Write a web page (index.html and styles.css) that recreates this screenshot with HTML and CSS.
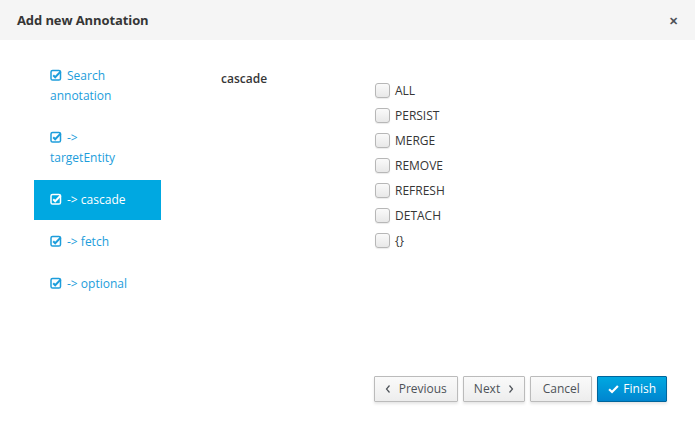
FILE: index.html
```html
<!DOCTYPE html>
<html>
<head>
<meta charset="utf-8">
<link rel="stylesheet" href="styles.css">
</head>
<body>
<div class="modal">
  <div class="modal-header">
    <span class="title">Add new Annotation</span>
    <span class="close">&#x2715;</span>
  </div>
  <div class="modal-body">
    <ul class="steps">
      <li class="step"><svg class="chk" viewBox="0 0 12 12"><rect x="1" y="1.5" width="9.5" height="9.5" rx="1.6" fill="none" stroke="currentColor" stroke-width="1.5"/><path d="M3.2 6.2 L5.2 8.2 L10.8 2.4" fill="none" stroke="currentColor" stroke-width="2"/></svg>Search annotation</li>
      <li class="step"><svg class="chk" viewBox="0 0 12 12"><rect x="1" y="1.5" width="9.5" height="9.5" rx="1.6" fill="none" stroke="currentColor" stroke-width="1.5"/><path d="M3.2 6.2 L5.2 8.2 L10.8 2.4" fill="none" stroke="currentColor" stroke-width="2"/></svg>-&gt; targetEntity</li>
      <li class="step active"><svg class="chk" viewBox="0 0 12 12"><rect x="1" y="1.5" width="9.5" height="9.5" rx="1.6" fill="none" stroke="currentColor" stroke-width="1.5"/><path d="M3.2 6.2 L5.2 8.2 L10.8 2.4" fill="none" stroke="currentColor" stroke-width="2"/></svg>-&gt; cascade</li>
      <li class="step"><svg class="chk" viewBox="0 0 12 12"><rect x="1" y="1.5" width="9.5" height="9.5" rx="1.6" fill="none" stroke="currentColor" stroke-width="1.5"/><path d="M3.2 6.2 L5.2 8.2 L10.8 2.4" fill="none" stroke="currentColor" stroke-width="2"/></svg>-&gt; fetch</li>
      <li class="step"><svg class="chk" viewBox="0 0 12 12"><rect x="1" y="1.5" width="9.5" height="9.5" rx="1.6" fill="none" stroke="currentColor" stroke-width="1.5"/><path d="M3.2 6.2 L5.2 8.2 L10.8 2.4" fill="none" stroke="currentColor" stroke-width="2"/></svg>-&gt; optional</li>
    </ul>
    <div class="form">
      <div class="field-label">cascade</div>
      <div class="options">
        <label class="opt"><span class="box"></span>ALL</label>
        <label class="opt"><span class="box"></span>PERSIST</label>
        <label class="opt"><span class="box"></span>MERGE</label>
        <label class="opt"><span class="box"></span>REMOVE</label>
        <label class="opt"><span class="box"></span>REFRESH</label>
        <label class="opt"><span class="box"></span>DETACH</label>
        <label class="opt"><span class="box"></span>{}</label>
      </div>
    </div>
  </div>
  <div class="modal-footer">
    <button class="btn"><svg class="ang" viewBox="0 0 6 10"><path d="M4.5 1.5 L1.5 5 L4.5 8.5" fill="none" stroke="currentColor" stroke-width="1.2"/></svg>Previous</button>
    <button class="btn">Next<svg class="ang right" viewBox="0 0 6 10"><path d="M1.5 1.5 L4.5 5 L1.5 8.5" fill="none" stroke="currentColor" stroke-width="1.2"/></svg></button>
    <button class="btn wide">Cancel</button>
    <button class="btn primary"><svg class="tick" viewBox="0 0 12 10"><path d="M1.2 5.2 L4.4 8.3 L10.8 1.8" fill="none" stroke="currentColor" stroke-width="2.4"/></svg>Finish</button>
  </div>
</div>
</body>
</html>
```

FILE: styles.css
```css
html, body {
  margin: 0;
  padding: 0;
  background: #fff;
}
body {
  font-family: "Open Sans", "Liberation Sans", sans-serif;
  font-size: 12px;
  color: #363636;
}
.modal {
  display: flex;
  flex-direction: column;
  height: 423px;
}
.modal-header {
  height: 40px;
  background: #f5f5f5;
  display: flex;
  align-items: center;
  justify-content: space-between;
  padding: 0 17px;
  flex: none;
}
.title {
  font-size: 13px;
  font-weight: 700;
  color: #363636;
  letter-spacing: -0.1px;
}
.close {
  font-size: 11px;
  font-weight: 700;
  color: #4d5258;
}
.modal-body {
  flex: 1;
  display: flex;
}
.steps {
  list-style: none;
  margin: 16px 0 0 34px;
  padding: 0;
  width: 127px;
}
.step {
  padding: 10px 16px;
  line-height: 20px;
  margin-bottom: 2px;
  color: #1c9ddb;
}
.step.active {
  background: #00a8e1;
  color: #fff;
}
.chk {
  width: 12px;
  height: 12px;
  margin-right: 5px;
  vertical-align: -1px;
}
.form {
  display: flex;
  margin-left: 60px;
  padding-top: 29px;
}
.field-label {
  width: 154px;
  line-height: 20px;
  font-weight: 600;
}
.options {
  display: flex;
  flex-direction: column;
  padding-top: 9px;
}
.opt {
  display: flex;
  align-items: center;
  height: 25px;
  color: #363636;
}
.box {
  width: 13px;
  height: 13px;
  border: 1px solid #b7b7b7;
  border-radius: 3px;
  background: linear-gradient(#fafafa, #e8e8e8);
  box-shadow: 0 1px 1px rgba(0,0,0,0.08);
  margin-right: 5px;
}
.modal-footer {
  display: flex;
  justify-content: flex-end;
  gap: 5px;
  padding: 0 28px 21px 0;
}
.btn {
  font-family: inherit;
  font-size: 12px;
  height: 26px;
  padding: 0 10px;
  line-height: 24px;
  border: 1px solid #bbb;
  border-radius: 1px;
  background: linear-gradient(#fafafa, #ededed);
  color: #4d5258;
  box-shadow: 0 2px 3px rgba(3,3,3,0.1);
  display: flex;
  align-items: center;
}
.btn.wide {
  padding: 0 11.5px;
}
.btn.primary {
  background: linear-gradient(#00a8e1, #0085cf);
  border-color: #00659c;
  color: #fff;
}
.ang {
  width: 6px;
  height: 10px;
  margin-right: 8px;
}
.ang.right {
  margin-right: 0;
  margin-left: 8px;
}
.tick {
  width: 11px;
  height: 10px;
  margin-right: 4px;
}
```
